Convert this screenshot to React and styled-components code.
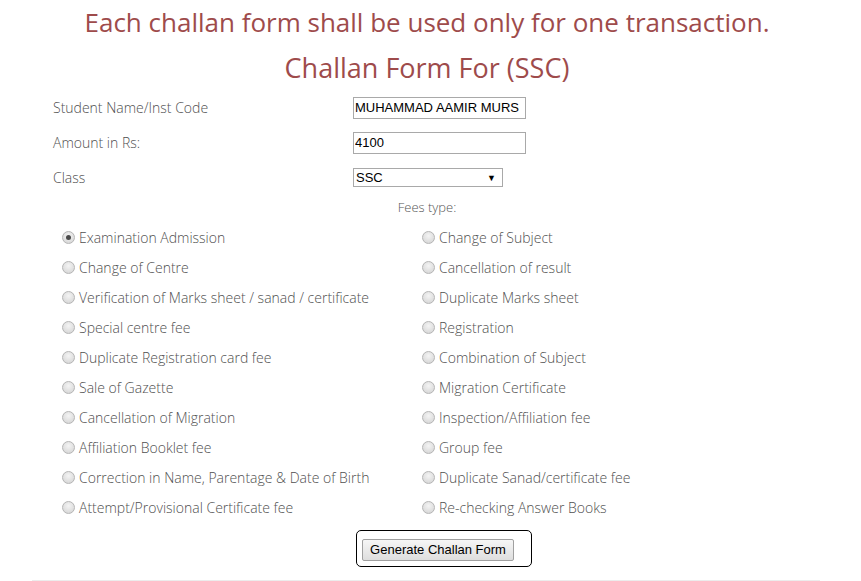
import styled, { createGlobalStyle } from 'styled-components';

const Global = createGlobalStyle`
  body {
    margin: 0;
    background: #fff;
    font-family: "Open Sans", sans-serif;
  }
`
const Page = styled.div`
  width: 854px;
  padding-top: 2px;
`
const Title = styled.h1`
  margin: ${p => p.mt || 0}px 0 0;
  text-align: center;
  font-family: "Open Sans", sans-serif;
  font-weight: 400;
  font-size: ${p => p.size}px;
  line-height: ${p => p.lh}px;
  color: #9e4b4b;
`
const FormRow = styled.div`
  display: grid;
  grid-template-columns: 300px 1fr;
  align-items: center;
  height: 35px;
  padding-left: 53px;
`
const Label = styled.span`
  font-size: 14px;
  font-weight: 300;
  color: #505050;
`
const TextBox = styled.input`
  box-sizing: border-box;
  width: 173px;
  height: 22px;
  border: 1px solid #a9a9a9;
  padding: 0 1px;
  font-family: "Liberation Sans", Arial, sans-serif;
  font-size: 13px;
  color: #000;
  outline: none;
`
const SelectBox = styled.div`
  box-sizing: border-box;
  width: 150px;
  height: 19px;
  border: 1px solid #a9a9a9;
  display: flex;
  align-items: center;
  justify-content: space-between;
  padding: 0 6px 0 2px;
  font-family: "Liberation Sans", Arial, sans-serif;
  font-size: 13px;
  color: #000;
`
const Arrow = styled.span`
  font-size: 9px;
`
const FeesHead = styled.div`
  text-align: center;
  font-size: 13px;
  font-weight: 300;
  color: #555;
  height: 25px;
  line-height: 25px;
`
const RadioGrid = styled.div`
  display: grid;
  grid-template-columns: 360px 1fr;
  grid-auto-rows: 30px;
  padding-left: 62px;
  margin-top: 2px;
`
const Option = styled.label`
  display: flex;
  align-items: center;
  gap: 4px;
  font-size: 14px;
  font-weight: 300;
  color: #505050;
  white-space: nowrap;
`
const Dot = styled.span`
  box-sizing: border-box;
  width: 13px;
  height: 13px;
  border-radius: 50%;
  border: 1px solid #b5b5b5;
  background: radial-gradient(circle at 50% 35%, #f4f4f4 0%, #dcdcdc 70%, #cfcfcf 100%);
  display: flex;
  align-items: center;
  justify-content: center;
  &::after {
    content: '';
    width: 5px;
    height: 5px;
    border-radius: 50%;
    background: ${p => (p.checked ? '#4a4a4a' : 'transparent')};
  }
`
const ButtonWrap = styled.div`
  display: flex;
  justify-content: center;
  margin-top: 8px;
  padding-left: 34px;
`
const ButtonFrame = styled.div`
  border: 1px solid #000;
  border-radius: 5px;
  padding: 6px 17px 5px 5px;
`
const Button = styled.button`
  font-family: "Liberation Sans", Arial, sans-serif;
  font-size: 13px;
  color: #000;
  height: 22px;
  padding: 0 7px;
  border: 1px solid #a0a0a0;
  border-radius: 2px;
  background: linear-gradient(#f6f6f6, #dedede);
`
const Rule = styled.hr`
  margin: 13px 34px 0 32px;
  border: none;
  border-top: 2px solid #ececec;
`

const left = [
  'Examination Admission',
  'Change of Centre',
  'Verification of Marks sheet / sanad / certificate',
  'Special centre fee',
  'Duplicate Registration card fee',
  'Sale of Gazette',
  'Cancellation of Migration',
  'Affiliation Booklet fee',
  'Correction in Name, Parentage & Date of Birth',
  'Attempt/Provisional Certificate fee',
]
const right = [
  'Change of Subject',
  'Cancellation of result',
  'Duplicate Marks sheet',
  'Registration',
  'Combination of Subject',
  'Migration Certificate',
  'Inspection/Affiliation fee',
  'Group fee',
  'Duplicate Sanad/certificate fee',
  'Re-checking Answer Books',
]

const App = () => {
  return (
    <Page>
      <Global />
      <Title size={26} lh={40}>Each challan form shall be used only for one transaction.</Title>
      <Title size={27} lh={44} mt={4}>Challan Form For (SSC)</Title>
      <FormRow>
        <Label>Student Name/Inst Code</Label>
        <TextBox defaultValue="MUHAMMAD AAMIR MURS" />
      </FormRow>
      <FormRow>
        <Label>Amount in Rs:</Label>
        <TextBox defaultValue="4100" />
      </FormRow>
      <FormRow>
        <Label>Class</Label>
        <SelectBox>SSC<Arrow>▼</Arrow></SelectBox>
      </FormRow>
      <FeesHead>Fees type:</FeesHead>
      <RadioGrid>
        {left.map((l, i) => [
          <Option key={'l' + i}><Dot checked={i === 0} />{l}</Option>,
          <Option key={'r' + i}><Dot />{right[i]}</Option>,
        ])}
      </RadioGrid>
      <ButtonWrap>
        <ButtonFrame>
          <Button>Generate Challan Form</Button>
        </ButtonFrame>
      </ButtonWrap>
      <Rule />
    </Page>
  );
};

export default App;
